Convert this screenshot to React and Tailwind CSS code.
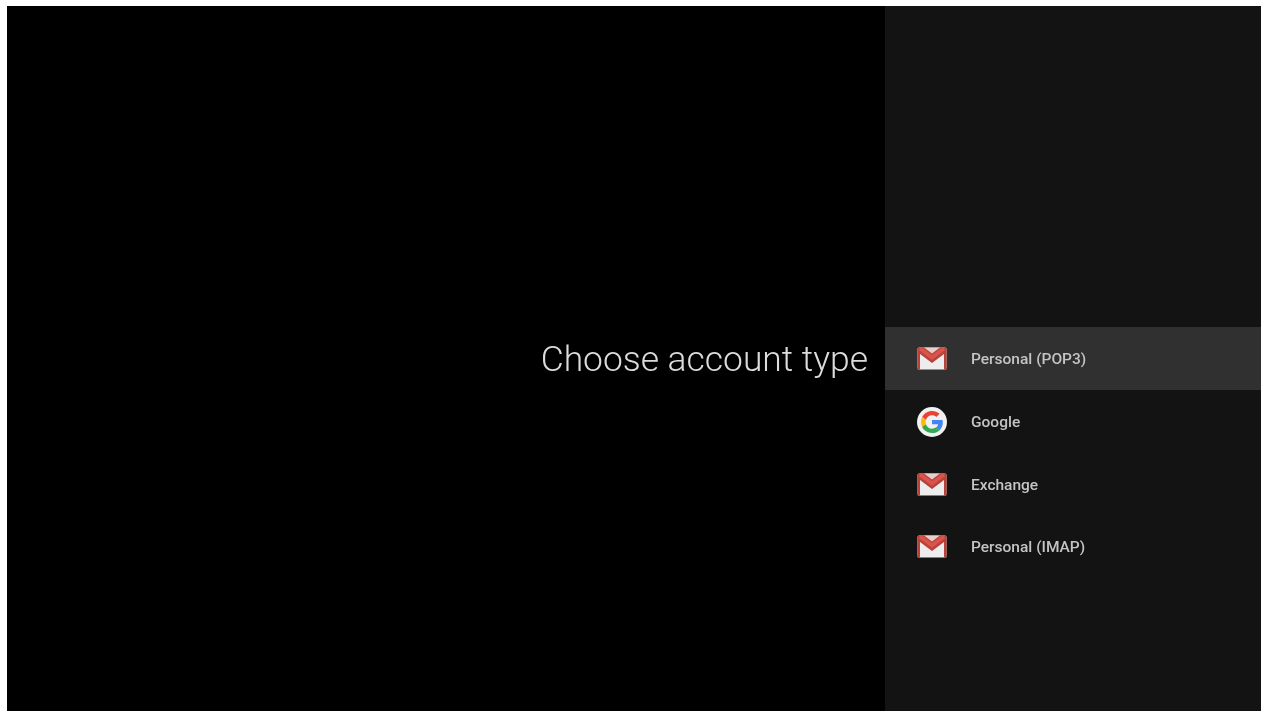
const GmailIcon = () => (
    <svg width="30" height="23" viewBox="0 0 30 23" className="shrink-0 blur-[0.6px]">
        <rect x="0.5" y="0.5" width="29" height="22" rx="1.5" fill="#ededed" />
        <path d="M0.5 22.500V2C0.500 1 1 .5 2 .5H28C29 .5 29.500 1 29.500 2V22.500H27V7L15 16L3 7V22.500Z" fill="#b8423a" />
        <path d="M3 1.500L15 10.500L27 1.500" fill="none" stroke="#d9544a" strokeWidth="4" />
        <path d="M7 .5H23L15 6.500Z" fill="#e8cfcc" />
    </svg>
);

const GoogleIcon = () => (
    <svg width="30" height="30" viewBox="0 0 30 30" className="shrink-0 blur-[0.6px]">
        <circle cx="15" cy="15" r="15" fill="#f1f1f1" />
        <g transform="translate(15 15) scale(1.15) translate(-15 -15)">
            <path d="M15 9.200c1.500 0 2.800.5 3.800 1.500l2.800-2.800C19.900 6.300 17.700 5.400 15 5.400c-3.800 0-7 2.200-8.600 5.300l3.300 2.500C10.500 10.900 12.500 9.200 15 9.200z" fill="#ea4335" />
            <path d="M24.400 15.200c0-.7-.1-1.300-.2-2H15v3.700h5.300c-.2 1.200-.9 2.200-2 2.900l3.200 2.500c1.800-1.700 2.900-4.200 2.900-7.100z" fill="#4285f4" />
            <path d="M9.700 16.800c-.2-.6-.3-1.200-.3-1.800s.1-1.200.3-1.800l-3.300-2.500C5.800 12 5.400 13.500 5.400 15s.4 3 1 4.300z" fill="#fbbc05" />
            <path d="M15 24.600c2.600 0 4.800-.9 6.500-2.300l-3.200-2.500c-.9.6-2 1-3.300 1-2.500 0-4.500-1.700-5.300-3.900l-3.300 2.500c1.600 3.100 4.800 5.200 8.600 5.200z" fill="#34a853" />
        </g>
    </svg>
);

const accounts = [
    { name: 'Personal (POP3)', icon: <GmailIcon />, active: true },
    { name: 'Google', icon: <GoogleIcon /> },
    { name: 'Exchange', icon: <GmailIcon /> },
    { name: 'Personal (IMAP)', icon: <GmailIcon /> },
];

const App = () => {
    return (
        <div className="w-[1265px] h-[714px] bg-white pl-[7px] pt-[6px] pr-[4px] pb-[3px] overflow-hidden font-['Roboto',sans-serif]">
            <div className="flex h-full bg-black">
                <div className="flex-1 flex flex-col pt-[322px] items-end pr-[17px]">
                    <h1 className="h-[63px] flex items-center text-[35.4px] font-light text-[#dcdcdc] leading-none whitespace-nowrap blur-[0.3px]">
                        Choose account type
                    </h1>
                </div>
                <div className="w-[376px] bg-[#131313] pt-[321px]">
                    {accounts.map(account => (
                        <div
                            key={account.name}
                            className={`h-[62.7px] flex items-center ${account.active ? 'bg-[#303030]' : ''}`}
                        >
                            <div className="w-[86px] pl-[32px] pt-[1px] flex">{account.icon}</div>
                            <span className="pt-[3px] text-[15.5px] font-medium text-[#c4c4c4] whitespace-nowrap blur-[0.3px]">{account.name}</span>
                        </div>
                    ))}
                </div>
            </div>
        </div>
    );
};

export default App;
